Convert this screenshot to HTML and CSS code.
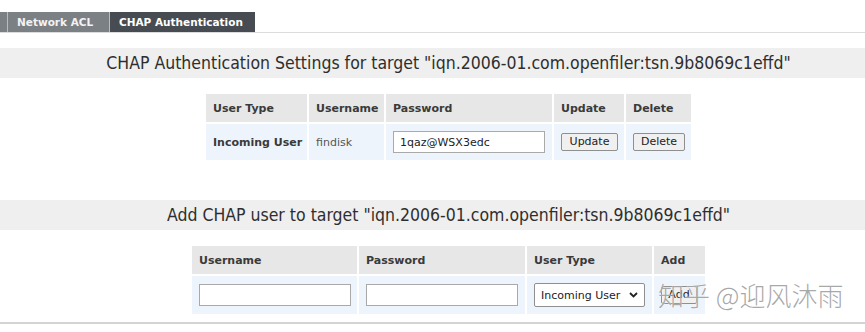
FILE: index.html
```html
<!DOCTYPE html>
<html>
<head>
<meta charset="utf-8">
<link rel="stylesheet" href="styles.css">
</head>
<body>
<div class="page">
  <div class="tabs">
    <div class="tab tab-partial"></div>
    <div class="tab">Network ACL</div>
    <div class="tab active">CHAP Authentication</div>
  </div>

  <div class="band band-first">CHAP Authentication Settings for target "iqn.2006-01.com.openfiler:tsn.9b8069c1effd"</div>

  <table class="grid grid-users">
    <colgroup>
      <col class="c-type"><col class="c-user"><col class="c-pass"><col class="c-upd"><col class="c-del">
    </colgroup>
    <tr class="head">
      <th>User Type</th>
      <th>Username</th>
      <th>Password</th>
      <th>Update</th>
      <th>Delete</th>
    </tr>
    <tr class="data">
      <td class="strong">Incoming User</td>
      <td class="muted">findisk</td>
      <td><input class="field field-pass" type="text" value="1qaz@WSX3edc"></td>
      <td><button class="btn btn-upd">Update</button></td>
      <td><button class="btn btn-del">Delete</button></td>
    </tr>
  </table>

  <div class="band band-second">Add CHAP user to target "iqn.2006-01.com.openfiler:tsn.9b8069c1effd"</div>

  <table class="grid grid-add">
    <colgroup>
      <col class="a-user"><col class="a-pass"><col class="a-type"><col class="a-add">
    </colgroup>
    <tr class="head">
      <th>Username</th>
      <th>Password</th>
      <th>User Type</th>
      <th>Add</th>
    </tr>
    <tr class="data data-tall">
      <td><input class="field field-wide" type="text"></td>
      <td><input class="field field-wide" type="text"></td>
      <td>
        <div class="select">
          <span>Incoming User</span>
          <svg class="chev" width="9" height="6" viewBox="0 0 9 6"><path d="M1 1 L4.5 4.5 L8 1" fill="none" stroke="#222" stroke-width="1.8"/></svg>
        </div>
      </td>
      <td><button class="btn btn-add">Add</button></td>
    </tr>
  </table>

  <div class="bottom-rule"></div>

  <div class="watermark">知乎 @迎风沐雨</div>
</div>
</body>
</html>
```

FILE: styles.css
```css
html, body {
  margin: 0;
  padding: 0;
  background: #ffffff;
  overflow: hidden;
}

.page {
  position: relative;
  width: 897px;
  font-family: "DejaVu Sans", Verdana, sans-serif;
  color: #333;
}

.tabs {
  display: flex;
  padding-top: 12px;
  height: 20px;
  border-bottom: 1px solid #dcdcdc;
}

.tab {
  height: 20px;
  box-sizing: border-box;
  padding: 0 0 0 9px;
  background: #7b8084;
  color: #f2f2f2;
  font-size: 10.5px;
  font-weight: bold;
  line-height: 20px;
  border-right: 1px solid #b9bcbe;
  width: 102px;
  white-space: nowrap;
}

.tab-partial {
  width: 8px;
  padding: 0;
}

.tab.active {
  background: #464c51;
  color: #ffffff;
  width: 145px;
  border-right: none;
}

.band {
  background: #efefef;
  height: 30px;
  line-height: 30px;
  text-align: center;
  font-family: "DejaVu Sans Condensed", "DejaVu Sans", sans-serif;
  font-size: 17.5px;
  color: #2e2e2e;
  white-space: nowrap;
}

.band-first {
  margin-top: 15px;
}

.band-second {
  margin-top: 38px;
}

.grid {
  border-collapse: separate;
  border-spacing: 2px;
  table-layout: fixed;
  margin: 14px auto 0;
  font-size: 11px;
}

.grid-users { width: 489px; }
.grid-add { width: 517px; }

.grid th {
  background: #e7e7e7;
  text-align: left;
  font-weight: bold;
  color: #3a3a3a;
  height: 28px;
  padding: 0 7px;
  box-sizing: border-box;
  white-space: nowrap;
}

.grid td {
  background: #eef4fb;
  height: 36px;
  padding: 0 7px;
  box-sizing: border-box;
  white-space: nowrap;
}

.data-tall td {
  height: 38px;
}

.grid .strong {
  font-weight: bold;
  color: #3a3a3a;
  padding-left: 7px;
  padding-right: 0;
}

.grid .muted {
  color: #555;
}

.c-type { width: 101px; }
.c-user { width: 75px; }
.c-pass { width: 166px; }
.c-upd { width: 70px; }
.c-del { width: 65px; }

.a-user { width: 165px; }
.a-pass { width: 166px; }
.a-type { width: 125px; }
.a-add { width: 51px; }

.field {
  box-sizing: border-box;
  height: 22px;
  border: 1px solid #a9a9a9;
  background: #fff;
  font-family: "DejaVu Sans", Verdana, sans-serif;
  font-size: 11px;
  color: #222;
  padding: 0 6px;
  margin: 0;
  display: block;
}

.field-pass {
  width: 152px;
}

.field-wide {
  width: 152px;
}

.btn {
  box-sizing: border-box;
  height: 18px;
  border: 1px solid #8f8f8f;
  border-radius: 2px;
  background: #f0f0f0;
  font-family: "DejaVu Sans", Verdana, sans-serif;
  font-size: 11px;
  color: #222;
  padding: 0 5px;
  margin: 0;
  line-height: 16px;
}

.btn-upd { width: 57px; }
.btn-del { width: 52px; }
.btn-add { width: 36px; }

.select {
  box-sizing: border-box;
  width: 111px;
  height: 24px;
  border: 1px solid #8f8f8f;
  border-radius: 2px;
  background: #fff;
  display: flex;
  align-items: center;
  justify-content: space-between;
  padding: 0 6px 0 6px;
  font-size: 11px;
  color: #222;
}

.chev {
  display: block;
}

.bottom-rule {
  margin-top: 6px;
  height: 2px;
  background: #d4d4d4;
}

.watermark {
  position: absolute;
  left: 658px;
  top: 279px;
  font-family: "Noto Sans CJK SC", sans-serif;
  font-size: 26px;
  font-weight: 300;
  line-height: 32px;
  color: rgba(140, 140, 140, 0.75);
  text-shadow: 0 0 1px #fff;
  white-space: nowrap;
}
```
